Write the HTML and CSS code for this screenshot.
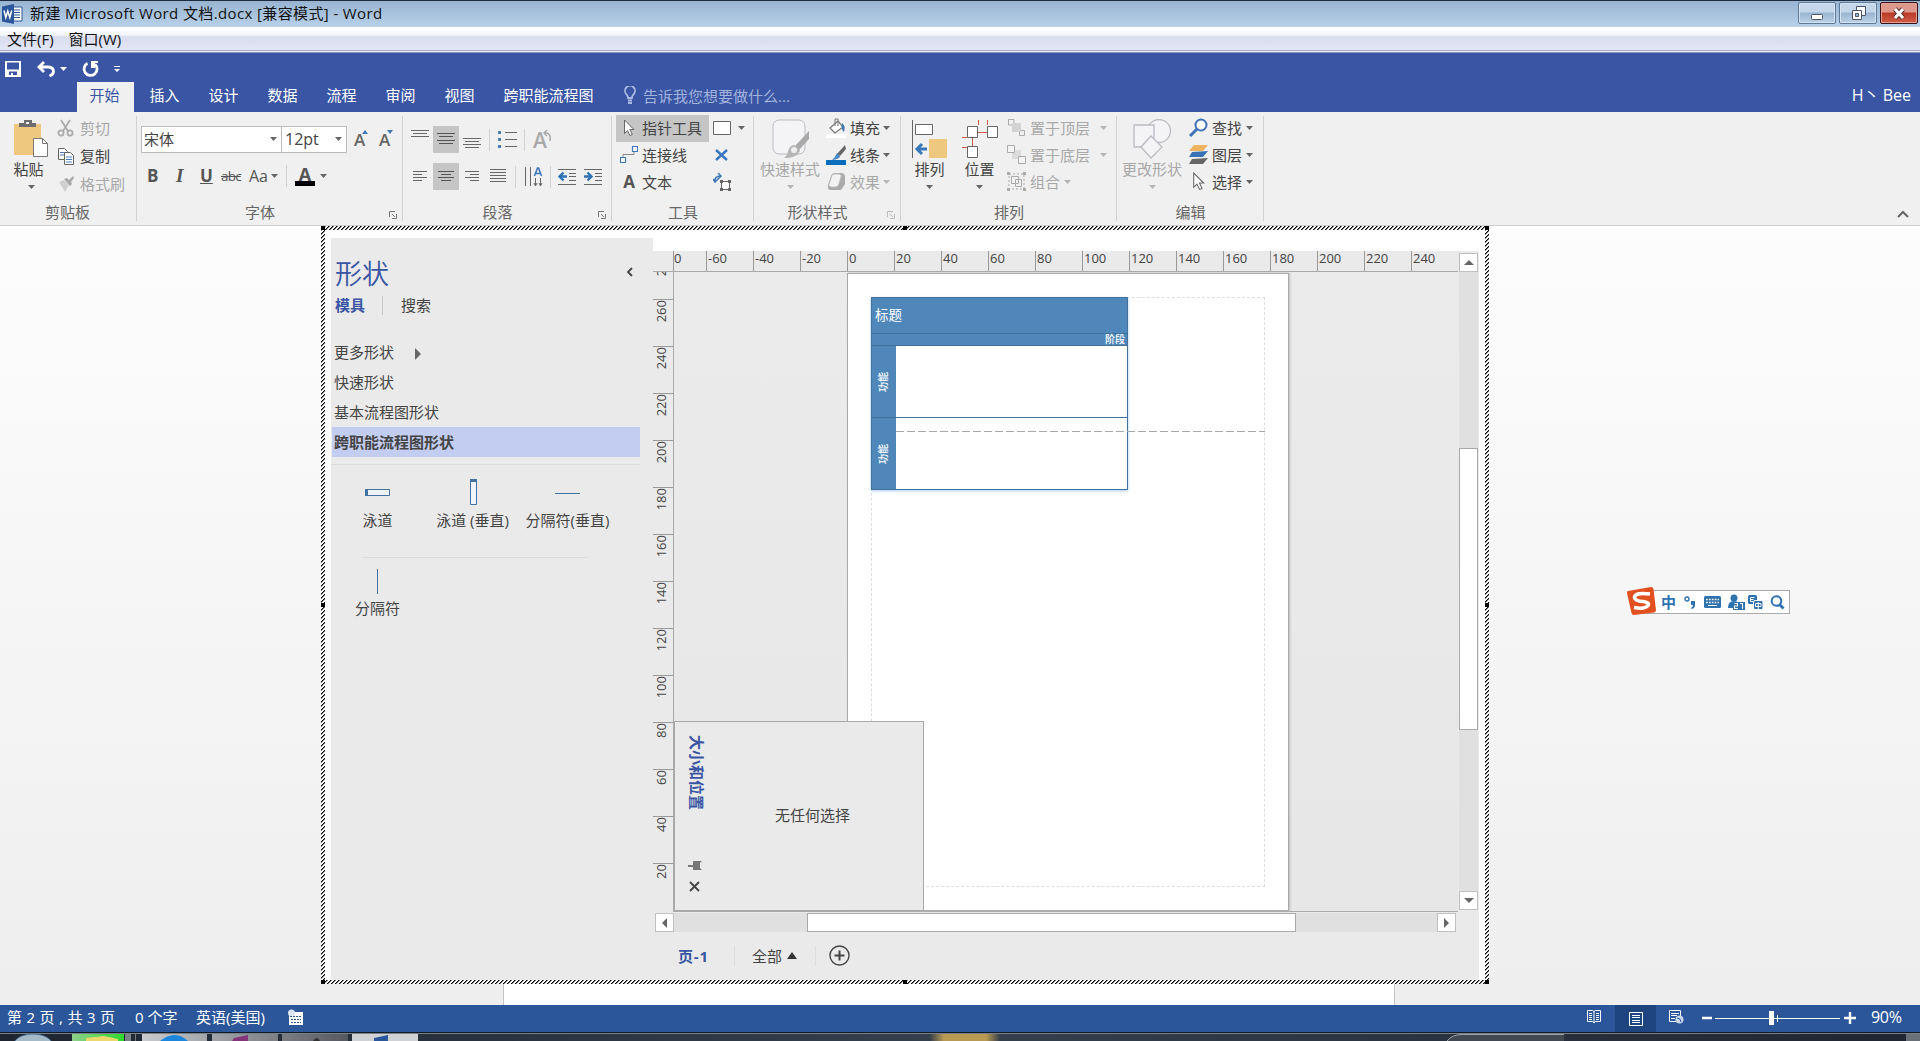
FILE: index.html
```html
<!DOCTYPE html>
<html lang="zh-CN">
<head>
<meta charset="utf-8">
<title>新建 Microsoft Word 文档.docx [兼容模式] - Word</title>
<link rel="stylesheet" href="styles.css">
</head>
<body>
<header class="titlebar">
  <svg class="app-icon" width="22" height="20" viewBox="0 0 22 20"><path d="M11 3h9v14h-9z" fill="#fff" stroke="#2b579a"/><path d="M12 6h6M12 8.500h6M12 11h6M12 13.500h6" stroke="#2b579a"/><path d="M0 2.500 12 0v20L0 17.500z" fill="#2b579a"/><path d="m2 6.500 1.800 7 2-6.500 2 6.500 1.900-7" fill="none" stroke="#fff" stroke-width="1.500"/></svg>
  <span class="window-title">新建 Microsoft Word 文档.docx [兼容模式] - Word</span>
  <div class="window-buttons">
    <span class="wbtn"><svg width="36" height="21"><rect x="12.500" y="11.500" width="11" height="5" rx="1" fill="#fff" stroke="#4a5566"/></svg></span>
    <span class="wbtn"><svg width="36" height="21"><path d="M16.500 3.500h9v9h-9z" fill="#fff" stroke="#4a5566"/><path d="M12.500 7.500h9v9h-9z" fill="#fff" stroke="#4a5566"/><path d="M15.500 10.500h3v3h-3z" fill="#9db8d4" stroke="#4a5566"/></svg></span>
    <span class="wbtn close"><svg width="36" height="21"><path d="m14 6 8 9m0-9-8 9" stroke="#5b3030" stroke-width="5"/><path d="m14 6 8 9m0-9-8 9" stroke="#fff" stroke-width="3"/></svg></span>
  </div>
</header>
<nav class="menubar"><span>文件(F)</span><span>窗口(W)</span></nav>

<div class="ribbon-head">
  <div class="qat">
    <svg width="17" height="17" viewBox="0 0 17 17"><path fill="#fff" fill-rule="evenodd" d="M0 0h16v16H0zM2 1.500v7h12v-7zM4 10.500V14h2v-2h2v2h4v-3.500z"/></svg>
    <svg class="undo" width="20" height="17" viewBox="0 0 20 17"><path d="M7 1 2 6l5 5M2.500 6h8q6 0 6 4.500 0 3-4 4.500" fill="none" stroke="#fff" stroke-width="2.800"/></svg>
    <svg class="caret w" width="7" height="4"><path d="M0 0h7L3.500 4z"/></svg>
    <svg class="redo" width="18" height="17" viewBox="0 0 18 17"><path d="M5.500 2.200A6.500 6.500 0 1 0 13 3.200" fill="none" stroke="#fff" stroke-width="2.800"/><path d="M9 0h7v2h-3v5H9z" fill="#fff"/></svg>
    <svg width="6" height="7"><path d="M0 0h6v1H0zM0 3h6L3 6z" fill="#fff"/></svg>
  </div>
  <div class="tabs">
    <span class="tab active">开始</span><span class="tab">插入</span><span class="tab">设计</span><span class="tab">数据</span><span class="tab">流程</span><span class="tab">审阅</span><span class="tab">视图</span><span class="tab wide">跨职能流程图</span>
    <span class="tell"><svg width="12" height="19" viewBox="0 0 12 19"><path d="M4 12q0-2-1.700-3.800a5 5 0 1 1 7.400 0Q8 10 8 12zM4 14.500h4M4 17h4" fill="none" stroke="#a9b8e2" stroke-width="1.800"/></svg>告诉我您想要做什么...</span>
    <span class="user"><span>H丶</span><span>Bee</span></span>
  </div>
</div>

<div class="ribbon">
  <section class="group g-clip">
    <div class="body">
      <div class="big paste"><svg width="36" height="40" viewBox="0 0 36 40"><path d="M1 5h27v31H1z" fill="#edc87e"/><path d="M6 8V4h5V1h8v3h4v4z" fill="#6d6d6d"/><path d="M13 3h3v2h-3z" fill="#f0f0f0"/><path d="M20.500 19.500h9l5 5v13h-14z" fill="#fff" stroke="#777"/><path d="M29.500 19.500v5h5" fill="none" stroke="#777"/></svg><span>粘贴</span><svg class="caret" width="7" height="4"><path d="M0 0h7L3.500 4z"/></svg></div>
      <div class="col">
        <div class="item off"><svg width="18" height="18" viewBox="0 0 18 18" fill="none" stroke="#aaa" stroke-width="1.800"><path d="m4 1 7 11M13 1 6 12"/><circle cx="4" cy="14" r="2.600"/><circle cx="13" cy="14" r="2.600"/></svg>剪切</div>
        <div class="item"><svg width="18" height="18" viewBox="0 0 18 18" fill="#fff" stroke="#666"><path d="M1.500 1.500h6l3 3v8h-9z"/><path d="M3 5.500h5M3 8h5" stroke="#4a7ebb"/><path d="M7.500 5.500h6l3 3v9h-9z"/><path d="M9 10h6M9 12.500h6M9 15h6" stroke="#4a7ebb"/></svg>复制</div>
        <div class="item off"><svg width="18" height="18" viewBox="0 0 18 18"><path d="m2 7 5-2 5 5-4 7z" fill="#d0d0d0"/><path d="m7 4 3-1 2 2 4-4 1 2-3 4 1 2-2 2z" fill="#a8a8a8"/></svg>格式刷</div>
      </div>
    </div>
    <div class="label">剪贴板</div>
  </section>

  <section class="group g-font">
    <div class="body stack">
      <div class="line combos"><span class="combo face">宋体<svg class="caret" width="7" height="4"><path d="M0 0h7L3.500 4z"/></svg></span><span class="combo size">12pt<svg class="caret" width="7" height="4"><path d="M0 0h7L3.500 4z"/></svg></span><span class="grow">A<svg width="6" height="4"><path d="M0 4h6L3 0z"/></svg></span><span class="grow">A<svg width="6" height="4"><path d="M0 0h6L3 4z"/></svg></span></div>
      <div class="line marks"><b class="m-b">B</b><b class="m-i">I</b><b class="m-u">U</b><span class="m-s">abc</span><span class="m-a">Aa</span><svg class="caret" width="7" height="4"><path d="M0 0h7L3.500 4z"/></svg><i class="vsep"></i><b class="m-c">A</b><svg class="caret" width="7" height="4"><path d="M0 0h7L3.500 4z"/></svg></div>
    </div>
    <div class="label">字体</div>
    <svg class="launcher" width="8" height="8"><path d="M.5 6V.5H6M3 3l3 3M7.500 3v4.500H3" fill="none" stroke="#777"/></svg>
  </section>

  <section class="group g-para">
    <div class="body stack">
      <div class="line p1">
        <svg width="26" height="27" stroke="#666"><path d="M4 4.500h18M6 7.500h14M4 10.500h18"/></svg>
        <svg class="on" width="26" height="27" stroke="#555"><path d="M4 7.500h18M6 10.500h14M4 14.500h18M6 17.500h14"/></svg>
        <svg width="26" height="27" stroke="#666"><path d="M4 12.500h18M6 15.500h14M4 18.500h18M6 21.500h14"/></svg>
        <i class="vsep a"></i>
        <svg class="bul" width="20" height="20"><path d="M7 2.500h12M7 9.500h12M7 16.500h12" stroke="#666"/><path d="M0 1h3v3H0zM0 8h3v3H0zM0 15h3v3H0z" fill="#4a7ebb"/></svg>
        <i class="vsep b"></i>
        <span class="rot">A<svg width="9" height="12" viewBox="0 0 9 12"><path d="M1 3h3q4 1 3 8M4 0 1 3l3 3" fill="none" stroke="#aaa" stroke-width="1.500"/></svg></span>
      </div>
      <div class="line p2">
        <svg width="26" height="27" stroke="#666"><path d="M6 8.500h14M6 11.500h9M6 14.500h14M6 17.500h9"/></svg>
        <svg class="on" width="26" height="27" stroke="#555"><path d="M5 8.500h16M8 11.500h10M5 14.500h16M8 17.500h10"/></svg>
        <svg width="26" height="27" stroke="#666"><path d="M6 8.500h14M11 11.500h9M6 14.500h14M11 17.500h9"/></svg>
        <svg width="26" height="27" stroke="#666"><path d="M5 6.500h16M5 9.500h16M5 12.500h16M5 15.500h16M5 18.500h16"/></svg>
        <i class="vsep c"></i>
        <svg class="vt" width="19" height="20" viewBox="0 0 19 20"><path d="M1.500 0v19M6.500 0v19M11.500 11v8M16.500 11v8M10 16l1.500 3 1.500-3M15 16l1.500 3 1.500-3" fill="none" stroke="#666"/><path d="m10.500 9 3-8h1l3 8M12 6.500h4" fill="none" stroke="#3f78b8" stroke-width="1.600"/></svg>
        <i class="vsep d"></i>
        <svg class="ind" width="19" height="18"><path d="M0 1.500h18M11 5.500h7M11 8.500h7M11 12.500h7M0 16.500h18" stroke="#666"/><path d="M9 8.500H2M5.500 4.500l-4 4 4 4" fill="none" stroke="#2f72b8" stroke-width="2.400"/></svg>
        <svg class="ind2" width="19" height="18"><path d="M0 1.500h18M11 5.500h7M11 8.500h7M11 12.500h7M0 16.500h18" stroke="#666"/><path d="M0 8.500h7M3.500 4.500l4 4-4 4" fill="none" stroke="#2f72b8" stroke-width="2.400"/></svg>
      </div>
    </div>
    <div class="label">段落</div>
    <svg class="launcher" width="8" height="8"><path d="M.5 6V.5H6M3 3l3 3M7.500 3v4.500H3" fill="none" stroke="#777"/></svg>
  </section>

  <section class="group g-tool">
    <div class="body">
      <div class="col">
        <div class="item sel"><svg width="18" height="18" viewBox="0 0 18 18"><path d="M4.500 1v13.500l3-3 2.500 5 2.300-1-2.400-5h4z" fill="#fff" stroke="#666"/></svg>指针工具</div>
        <div class="item"><svg width="18" height="18" viewBox="0 0 18 18" fill="#fff"><path d="M3 12V8.500h11V6" fill="none" stroke="#888"/><path d="M.5 11.500h5v5h-5zM12.500.5h5v5h-5z" stroke="#3f78b8" stroke-width="1.200"/></svg>连接线</div>
        <div class="item"><b class="ta">A</b>文本</div>
      </div>
      <div class="col side">
        <div class="item"><svg width="18" height="14"><path d="M.5.5h17v13H.5z" fill="#fff" stroke="#666"/></svg><svg class="caret" width="7" height="4"><path d="M0 0h7L3.500 4z"/></svg></div>
        <div class="item"><svg width="18" height="14"><path d="m3 2 11 10M14 2 3 12" stroke="#3a77c0" stroke-width="2.400"/></svg></div>
        <div class="item"><svg width="18" height="18" fill="none"><path d="M1.500 9q0-6 6-6M5 0l3 3-3 3M0 6l2 3 3-3" stroke="#3f78b8" stroke-width="1.500"/><path d="M8.500 8.500h8v8h-8z" stroke="#666" fill="#fff"/><path d="M7 7h3v3H7zM15 7h3v3h-3zM7 15h3v3H7zM15 15h3v3h-3z" fill="#666"/></svg></div>
      </div>
    </div>
    <div class="label">工具</div>
  </section>

  <section class="group g-style">
    <div class="body">
      <div class="big off quick"><svg width="40" height="40" viewBox="0 0 40 40"><rect x="3" y="1" width="32" height="34" rx="6" fill="#f4f3f6" stroke="#bdbac2"/><path d="M39 12v8l-10 11-4-4z" fill="#aaa"/><path d="m24 26 6 5q-2 8-16 8 4-3 4-7 2-6 6-6z" fill="#b5b5b5"/><circle cx="24" cy="31" r="3" fill="#eee"/></svg><span>快速样式</span><svg class="caret" width="7" height="4"><path d="M0 0h7L3.500 4z"/></svg></div>
      <div class="col">
        <div class="item"><svg width="20" height="20"><path d="m4 10 8-7 5 6-8 6z" fill="#fff" stroke="#777" stroke-width="1.200"/><path d="M9 8V1h3v7" fill="none" stroke="#777"/><path d="M16 5q4 3 2 9-3-2-2-9z" fill="#3f78b8"/><path d="M0 16h20v4H0z" fill="#fff"/></svg>填充<svg class="caret" width="7" height="4"><path d="M0 0h7L3.500 4z"/></svg></div>
        <div class="item"><svg width="20" height="20"><path d="m19 0 1 4-6 7-3-2z" fill="#666"/><path d="m11 8 3 3q0 3-8 4 3-2 5-7z" fill="#4a86c8"/><path d="M0 15h20v5H0z" fill="#0a6ebd"/></svg>线条<svg class="caret" width="7" height="4"><path d="M0 0h7L3.500 4z"/></svg></div>
        <div class="item off"><svg width="20" height="20"><path d="M2 13 5 4q1-3 4-3h6q4 0 4 4v7l-4 6H5q-4 0-3-5z" fill="#aaa"/><path d="m6 3-3 9q-1 3 2 3h5q2 0 3-3l2-7q1-3-2-3H9Q7 2 6 3z" fill="#f3f3f3" stroke="#bbb"/></svg>效果<svg class="caret" width="7" height="4"><path d="M0 0h7L3.500 4z"/></svg></div>
      </div>
    </div>
    <div class="label">形状样式</div>
    <svg class="launcher off" width="8" height="8"><path d="M.5 6V.5H6M3 3l3 3M7.500 3v4.500H3" fill="none" stroke="#bbb"/></svg>
  </section>

  <section class="group g-arr">
    <div class="body">
      <div class="big"><svg width="37" height="40" viewBox="0 0 37 40"><path d="M1.500 1v38" stroke="#666"/><path d="M4.500 5.500h17v10h-17z" fill="#fff" stroke="#666"/><path d="M18 20h18v19H18z" fill="#edc87e"/><path d="M16 30H6m5-5-5 5 5 5" fill="none" stroke="#3a77b8" stroke-width="3"/></svg><span>排列</span><svg class="caret" width="7" height="4"><path d="M0 0h7L3.500 4z"/></svg></div>
      <div class="big pos"><svg width="37" height="40" viewBox="0 0 37 40"><path d="M17.500 1v5M26.500 1v5M17 13.500h9M1 18.500h5M11.500 18v10M1 28.500h5M17 28.500h-3" stroke="#d05a48" fill="none"/><path d="M6.500 7.500h10v11h-10zM26.500 7.500h10v11h-10zM6.500 27.500h10v11h-10z" fill="#fff" stroke="#666"/></svg><span>位置</span><svg class="caret" width="7" height="4"><path d="M0 0h7L3.500 4z"/></svg></div>
      <div class="col">
        <div class="item off"><svg width="19" height="19"><path d="M1.500 7V1.500H7V7zM12.500 12.500h5v5h-5z" fill="#f0f0f0" stroke="#aaa"/><path d="M5 5h9v9H5z" fill="#d3d3d3"/></svg>置于顶层<svg class="caret far" width="7" height="4"><path d="M0 0h7L3.500 4z"/></svg></div>
        <div class="item off"><svg width="19" height="19"><path d="M5 5h9v9H5z" fill="#dcdcdc"/><path d="M.5.5h7v7h-7zM11.500 11.500h7v7h-7z" fill="#f4f4f4" stroke="#aaa"/></svg>置于底层<svg class="caret far" width="7" height="4"><path d="M0 0h7L3.500 4z"/></svg></div>
        <div class="item off"><svg width="19" height="19" fill="none" stroke="#aaa"><path d="M2 2h15v15H2z" stroke-dasharray="2 2"/><path d="M4.500 4.500h7v7h-7zM8.500 7.500h6v7h-6z"/><path d="M0 0h3v3H0zM16 0h3v3h-3zM0 16h3v3H0zM16 16h3v3h-3z" fill="#aaa" stroke="none"/></svg>组合<svg class="caret" width="7" height="4"><path d="M0 0h7L3.500 4z"/></svg></div>
      </div>
    </div>
    <div class="label">排列</div>
  </section>

  <section class="group g-edit">
    <div class="body">
      <div class="big off"><svg width="38" height="40" viewBox="0 0 38 40" fill="#f4f3f6" stroke="#bdbac2" stroke-width="1.300"><circle cx="26" cy="12" r="11.500"/><path d="M1 6h20v22H1z"/><path d="m18 17 11 11-11 11L8 28z"/></svg><span>更改形状</span><svg class="caret" width="7" height="4"><path d="M0 0h7L3.500 4z"/></svg></div>
      <div class="col">
        <div class="item"><svg width="19" height="19" fill="none" stroke="#3f72b8"><circle cx="12" cy="7" r="5.500" stroke-width="2" fill="#fff"/><path d="m8 11-7 7" stroke-width="3"/></svg>查找<svg class="caret" width="7" height="4"><path d="M0 0h7L3.500 4z"/></svg></div>
        <div class="item"><svg width="19" height="19"><path d="M5 0h14l-5 6H0z" fill="#eeb35e"/><path d="m3 7 16-1-5 6H0z" fill="#3a72b8"/><path d="m3 14 16-1-5 6H0z" fill="#666"/></svg>图层<svg class="caret" width="7" height="4"><path d="M0 0h7L3.500 4z"/></svg></div>
        <div class="item"><svg width="19" height="19" viewBox="0 0 18 18"><path d="M4.500 1v13.500l3-3 2.500 5 2.300-1-2.400-5h4z" fill="#fff" stroke="#666"/></svg>选择<svg class="caret" width="7" height="4"><path d="M0 0h7L3.500 4z"/></svg></div>
      </div>
    </div>
    <div class="label">编辑</div>
  </section>
  <svg class="collapse" width="12" height="8"><path d="m1 7 5-5 5 5" fill="none" stroke="#666" stroke-width="2"/></svg>
</div>

<main class="desk">
  <div class="object">
    <div class="inner">
      <aside class="shapes">
        <div class="sh-head"><h1>形状</h1><svg width="7" height="10"><path d="M6 1 2 5l4 4" fill="none" stroke="#444" stroke-width="1.800"/></svg></div>
        <div class="sh-tabs"><b>模具</b><i></i><span>搜索</span></div>
        <ul class="stencils">
          <li>更多形状<svg width="6" height="12"><path d="M0 0v12l6-6z" fill="#666"/></svg></li>
          <li>快速形状</li>
          <li>基本流程图形状</li>
          <li class="cur">跨职能流程图形状</li>
        </ul>
        <div class="masters">
          <div class="master"><svg width="30" height="30"><path d="M2.500 12.500h24v6h-24z" fill="#eef4fb" stroke="#44719f"/><path d="M2 12h3v7H2z" fill="#44719f"/></svg>泳道</div>
          <div class="master"><svg width="30" height="30"><path d="M12.500 3.500h6v24h-6z" fill="#eef4fb" stroke="#44719f"/><path d="M12 2h7v3h-7z" fill="#44719f"/></svg>泳道 (垂直)</div>
          <div class="master"><svg width="30" height="30"><path d="M2 16.500h25" stroke="#44719f"/></svg>分隔符(垂直)</div>
        </div>
        <div class="masters second">
          <div class="master"><svg width="30" height="30"><path d="M14.500 3v25" stroke="#44719f"/></svg>分隔符</div>
        </div>
      </aside>
      <section class="draw">
        <div class="rulers">
          <div class="hruler"><span class="first">0</span><span>-60</span><span>-40</span><span>-20</span><span>0</span><span>20</span><span>40</span><span>60</span><span>80</span><span>100</span><span>120</span><span>140</span><span>160</span><span>180</span><span>200</span><span>220</span><span>240</span></div>
          <div class="vruler"><span class="first">280</span><span>260</span><span>240</span><span>220</span><span>200</span><span>180</span><span>160</span><span>140</span><span>120</span><span>100</span><span>80</span><span>60</span><span>40</span><span>20</span></div>
          <div class="canvas">
            <div class="paper">
              <div class="margin"></div>
              <div class="pool">
                <div class="pool-title">标题</div>
                <div class="phase">阶段</div>
                <div class="lane"><div><span>功能</span></div></div>
                <div class="lane"><div><span>功能</span></div></div>
              </div>
              <div class="break"></div>
            </div>
            <div class="sizepos">
              <div class="sp-side"><b>大小和位置</b><svg width="14" height="11"><path d="M0 5h5V1h9l-2 2v5l2 2H5V7H0z" fill="#777"/></svg><svg class="x" width="11" height="11"><path d="m1 1 9 9m0-9-9 9" stroke="#444" stroke-width="1.800"/></svg></div>
              <span>无任何选择</span>
            </div>
          </div>
          <div class="vscroll"><span class="sb"><svg width="10" height="5"><path d="M0 5h10L5 0z"/></svg></span><span class="vthumb"></span><span class="sb"><svg width="10" height="5"><path d="M0 0h10L5 5z"/></svg></span></div>
        </div>
        <div class="hscroll"><span class="sb"><svg width="5" height="10"><path d="M5 0v10L0 5z"/></svg></span><span class="hthumb"></span><span class="sb"><svg width="5" height="10"><path d="M0 0v10l5-5z"/></svg></span></div>
        <div class="pagetabs"><b>页-1</b><i></i><span>全部</span><svg class="up" width="10" height="7"><path d="M0 7h10L5 0z" fill="#333"/></svg><i></i><svg width="21" height="21"><circle cx="10.500" cy="10.500" r="9.500" fill="none" stroke="#444" stroke-width="1.400"/><path d="M10.500 5.500v10M5.500 10.500h10" stroke="#444" stroke-width="2"/></svg></div>
      </section>
    </div>
    <svg class="frame" width="1168" height="758"><defs><pattern id="h" width="4" height="4" patternUnits="userSpaceOnUse"><path d="M0 3h1v1H0zM1 2h1v1H1zM2 1h1v1H2zM3 0h1v1H3z" fill="#000"/><path d="M1 3h1v1H1zM2 2h1v1H2zM3 1h1v1H3zM0 0h1v1H0z" fill="#777"/></pattern></defs><path fill="url(#h)" fill-rule="evenodd" d="M0 0h1168v758H0zM4 4v750h1160V4z"/><path d="M0 0h4v4H0zM582 0h4v4h-4zM1164 0h4v4h-4zM0 377h4v4H0zM1164 377h4v4h-4zM0 754h4v4H0zM582 754h4v4h-4zM1164 754h4v4h-4z"/></svg>
  </div>
  <div class="under"></div>
  <div class="ime">
    <svg class="sogou" width="30" height="30" viewBox="0 0 30 30"><path d="m1 5 23-4q2 0 2.500 2L29 24q0 2-2 2.500L7 29q-2 0-2.500-2L0 7q0-2 1-2z" fill="#e2501f"/><path d="M23 8Q8 6 7.500 11.500 8 15 16 15.500q7 1 5 4-3 4-14 2" fill="none" stroke="#fff" stroke-width="3.600"/></svg>
    <b>中</b>
    <svg class="punct" width="12" height="16"><circle cx="3" cy="5" r="2" fill="none" stroke="#2f72b0" stroke-width="1.400"/><path d="M7 7h4v4q0 3-3 4l-1-1q2-1 2-3H7z" fill="#2f72b0"/></svg>
    <svg width="17" height="12"><rect width="17" height="12" rx="1.500" fill="#2f72b0"/><path d="M2 3.500h13M2 6.500h13" stroke="#fff" stroke-width="1.500" stroke-dasharray="1.700 1.200"/><path d="M4 9.500h9" stroke="#fff"/></svg>
    <svg class="person" width="17" height="16"><circle cx="6" cy="4" r="3.500" fill="#2f72b0"/><path d="M0 14q0-7 6-7t6 7z" fill="#2f72b0"/><path d="M5 8h12v8H5z" fill="#2f72b0"/><path d="M6.500 9.500h3v2.500h-3v2.500h3.500M12 9.500h2.500v5.500" fill="none" stroke="#fff" stroke-width="1.100"/></svg>
    <svg width="15" height="15"><rect width="9" height="9" rx="1.500" fill="#2f72b0"/><path d="M6.500 2.500h-4v4h4M2.500 4.500h3" stroke="#fff" fill="none"/><rect x="5.500" y="5.500" width="9.500" height="9" rx="1.500" fill="#2f72b0" stroke="#fff"/><path d="M7.500 8.500h5.500v3H7.500zM10.250 7v7" stroke="#fff" fill="none"/></svg>
    <svg width="15" height="15"><circle cx="6.500" cy="6" r="4.800" fill="none" stroke="#2f72b0" stroke-width="2"/><path d="m9.500 9.500 4 4" stroke="#2f72b0" stroke-width="2.800"/></svg>
  </div>
</main>

<footer class="status">
  <span class="s1">第 2 页 , 共 3 页</span><span class="s2">0 个字</span><span class="s3">英语(美国)</span>
  <svg width="16" height="17"><path d="M3 3h12v13H1V7" fill="#fff"/><circle cx="3.500" cy="4" r="3.500" fill="#dbe5f4"/><path d="M2 7.500h12M3 10.500h10M3 13.500h10" stroke="#2b579a" stroke-dasharray="2 1"/></svg>
  <div class="views">
    <svg width="14" height="14"><path d="M.5.5h5l1.500 1 1.500-1h5v11h-5L7 13l-1.500-1.500h-5zM7 1v12M2 3.500h3M2 5.500h3M2 7.500h3M2 9.500h3M9 3.500h3M9 5.500h3M9 7.500h3M9 9.500h3" fill="none" stroke="#fff"/></svg>
    <span class="cur"><svg width="14" height="14"><path d="M.5.5h13v13H.5zM3 3.500h8M3 5.500h8M3 8.500h8M3 10.500h8" fill="none" stroke="#fff"/></svg></span>
    <svg width="15" height="14"><path d="M7 11.500H.5V.5h11V6M2 3.500h8M2 5.500h6M2 8.500h4" fill="none" stroke="#fff"/><circle cx="10.500" cy="9.500" r="4" fill="#c9d7ec"/><path d="m8 8 3 1 1 3" fill="none" stroke="#2b579a"/></svg>
  </div>
  <svg class="zoomer" width="154" height="16"><path d="M0 8h10M142 8h12M148 2v12" stroke="#fff" stroke-width="2.400"/><path d="M13 8.500h125M75.500 5v7" stroke="#fff"/><path d="M67 1h5v14h-5z" fill="#fff"/></svg>
  <span class="pct">90%</span>
</footer>
<div class="taskbar">
  <svg width="1920" height="9"><defs><linearGradient id="b" x2="1"><stop offset="0" stop-color="#c8cacd"/><stop offset="1" stop-color="#55595f"/></linearGradient><linearGradient id="g" x2="1"><stop offset="0" stop-color="#8fd08a"/><stop offset="1" stop-color="#2fd82c"/></linearGradient><linearGradient id="y" x2="1"><stop offset="0" stop-color="#b99a52" stop-opacity="0"/><stop offset=".2" stop-color="#b99a52"/><stop offset=".8" stop-color="#b99a52"/><stop offset="1" stop-color="#b99a52" stop-opacity="0"/></linearGradient></defs><path d="M0 .5h1920" stroke="#141a22"/><path d="M0 1.500h1920" stroke="#77818c"/><ellipse cx="33" cy="14" rx="20" ry="12" fill="#a5bac9" stroke="#4a6f92"/><path d="M72 2h52v7H72z" fill="url(#g)"/><path d="M86 9V6l18-2 14 3v2z" fill="#ecd86c"/><path d="M125 2h6v7h-6z" fill="#7b8288"/><path d="M135 2h1v7h-1z" fill="#777"/><path d="M142 2h65v7h-65zM212 2h66v7h-66zM282 2h66v7h-66z" fill="url(#b)"/><path d="M352 2h66v7h-66z" fill="#cfd1d5"/><path d="M160 9q15-12 28 0z" fill="#1b86dc"/><path d="m234 6 14-3v6h-16z" fill="#84357a"/><path d="M313 9q4-6 7 0z" fill="#333"/><path d="m374 6 14-3v6h-14z" fill="#2b579a"/><path d="M930 2h70v7h-70z" fill="url(#y)"/><path d="M1447 9q5-7 15-7h102v7z" fill="#414a53"/><path d="M1447 9q5-6.500 15-6.500h102" fill="none" stroke="#99a1a8"/><path d="M1906 2h14v7h-14z" fill="#687078"/></svg>
</div>
</body>
</html>
```

FILE: styles.css
```css
* { box-sizing: border-box; }
body {
  margin: 0; width: 1920px; height: 1041px; overflow: hidden;
  display: flex; flex-direction: column;
  font: 15px/20px "Open Sans", "Noto Sans CJK SC", sans-serif; color: #444; white-space: nowrap;
}
svg { display: block; flex: none; }
h1, ul { margin: 0; padding: 0; list-style: none; font-weight: normal; }
.caret { fill: #666; }
.caret.w { fill: #fff; }
.off .caret { fill: #b5b5b5; }

/* Window chrome */
.titlebar { height: 27px; flex: none; display: flex; align-items: center; padding: 0 0 1px 2px; color: #111;
  background: linear-gradient(#98b4d0, #b9d1ea); border-top: 1px solid #1d2b40; }
.window-title { margin-left: 6px; letter-spacing: .38px; padding-bottom: 1px; }
.window-buttons { display: flex; gap: 3px; margin: -2px 2px 0 auto; }
.wbtn { width: 38px; height: 22px; border: 1px solid #5f7896; border-radius: 2px; box-shadow: inset 0 0 0 1px #d5e3f2;
  background: linear-gradient(#c4d6e9 45%, #99b3cf 50%, #bcd2e8); }
.wbtn.close { border-color: #3d1015; box-shadow: inset 0 0 0 1px #e2a296; background: linear-gradient(#dd988b 45%, #ba3925 50%, #cf6048); }
.menubar { height: 26px; flex: none; display: flex; gap: 15px; padding: 2px 7px 0; color: #111;
  background: linear-gradient(#fff, #f3f5fb 30%, #d8dcee 38%, #e2e6f5 88%, #9fa9b8 90%, #eef 94%, #5e78a0); }

.ribbon-head { height: 59px; flex: none; background: #3955a3; color: #fff; }
.qat { height: 29px; display: flex; align-items: center; padding: 3px 0 0 5px; }
.undo { margin: 0 3px 0 15px; }
.redo { margin: 0 14px 0 15px; }
.tabs { display: flex; height: 30px; padding-left: 77px; line-height: 26px; }
.tab { width: 59px; text-align: center; }
.tab.wide { width: 119px; }
.tab.active { width: 57px; margin-right: 1px; padding-right: 2px; background: #f0f0f0; color: #3955a3; }
.tell { display: flex; align-items: center; gap: 7px; margin-left: 16px; color: #a3b2de; padding-bottom: 3px; }
.user { margin: 0 9px 0 auto; font-size: 16px; display: flex; gap: 2px; }
.user span:first-child { width: 29px; }

/* Ribbon */
.ribbon { height: 114px; flex: none; display: flex; background: #f0f0f0; border-bottom: 1px solid #d0d0d0; }
.group { position: relative; display: flex; flex-direction: column; }
.group::after { content: ""; position: absolute; right: 0; top: 4px; bottom: 4px; width: 1px; background: #d2d2d2; }
.body { height: 88px; display: flex; padding-top: 3px; }
.body.stack { flex-direction: column; padding-top: 14px; gap: 10px; }
.label { text-align: center; color: #666; line-height: 26px; }
.launcher { position: absolute; right: 6px; bottom: 6px; }
.g-clip { width: 137px; } .g-font { width: 266px; } .g-para { width: 209px; } .g-tool { width: 142px; }
.g-style { width: 147px; } .g-arr { width: 216px; } .g-edit { width: 147px; }
.g-font .label, .g-para .label { margin-right: 20px; }
.big { display: flex; flex-direction: column; align-items: center; padding-top: 4px; }
.big span { line-height: 20px; margin: 0 0 6px; }
.off { color: #a8a8a8; }
.col { display: flex; flex-direction: column; }
.item { height: 27px; display: flex; align-items: center; gap: 4px; padding-bottom: 2px; }
.item .caret { margin: 1px 0 0 0; }
.g-clip .label { margin-right: 2px; }
.g-clip .body { padding-left: 13px; gap: 8px; }
.g-clip .item { height: 28px; gap: 5px; }
.paste { width: 36px; }
.paste span { margin-right: 5px; }
.line { height: 27px; display: flex; align-items: center; }
.combos { padding-left: 4px; }
.combo { height: 27px; border: 1px solid #bbb; background: #fff; display: flex; align-items: center; padding: 0 4px 1px 2px; justify-content: space-between; }
.face { width: 141px; } .size { width: 66px; margin-left: -1px; padding-left: 3px; font-size: 16px; }
.grow { display: flex; align-items: flex-start; margin-left: 7px; font-size: 17px; font-weight: 600; color: #666; width: 18px; }
.grow svg { fill: #3f78b8; margin: 0 0 0 -3px; }
.marks { font-size: 17px; padding: 0 0 2px 10px; color: #555; }
.m-b { width: 29px; } .m-i { width: 24px; font: italic bold 19px "Liberation Serif", serif; } .m-u { width: 21px; text-decoration: underline; }
.m-s { width: 28px; font-size: 13.500px; text-decoration: line-through; letter-spacing: -.8px; } .m-a { width: 22px; font-size: 16px; }
.vsep { width: 1px; height: 22px; background: #d2d2d2; }
.marks .vsep { margin: 0 8px 0 8px; }
.m-c { width: 20px; height: 20px; line-height: 16px; text-align: center; border-bottom: 5px solid #000; margin-right: 5px; font-size: 18px; }
.p1, .p2 { padding-left: 4px; }
.on { background: #c5c5c5; }
.vsep.a { margin: 0 8px 0 4px; } .bul { margin-right: 6px; } .vsep.b { margin-right: 8px; }
.rot { display: flex; font-size: 21px; font-weight: 600; color: #aaa; }
.rot svg { margin-left: -4px; }
.vsep.c { margin: 0 8px 0 4px; } .vsep.d { margin: 0 7px; } .ind2 { margin-left: 7px; }
.g-tool .body { padding-left: 4px; gap: 4px; }
.g-tool .item { padding-left: 4px; width: 93px; }
.g-tool .side .item { width: 34px; padding-left: 0; }
.side .item .caret { margin-left: 3px; }
.sel { background: #c5c5c5; }
.ta { width: 18px; font-size: 17px; text-align: center; color: #555; }
.g-style .body { padding-left: 6px; gap: 6px; } .g-style .label { margin-right: 20px; }
.g-style .item .caret { margin-left: -1px; }
.g-arr .body { padding-left: 10px; } .g-arr .pos { margin: 0 9px 0 13px; }
.item .far { margin-left: 6px; }
.g-edit .body { padding-left: 5px; gap: 7px; }
.collapse { margin: 98px 11px 0 auto; }

/* Document area and embedded drawing */
.desk { flex: 1; min-height: 0; position: relative; background: linear-gradient(#fdfdfd, #eee); }
.object { position: relative; margin-left: 321px; width: 1168px; height: 758px; padding: 4px; background: #fff; }
.frame { position: absolute; left: 0; top: 0; }
.inner { display: flex; height: 750px; margin: 0 6px; }
.shapes { width: 322px; margin-top: 8px; background: #eaeaea; padding-top: 18px; }
.sh-head { display: flex; align-items: center; justify-content: space-between; height: 34px; padding: 0 20px 2px 4px; }
.sh-head h1 { font-size: 27px; line-height: 34px; color: #3955a3; font-weight: 350; padding-top: 3px; }
.sh-tabs { display: flex; align-items: center; margin: 5px 0 0 4px; }
.sh-tabs b { color: #3955a3; } .sh-tabs i { width: 1px; height: 19px; margin: 0 18px 0 17px; background: #c8c8c8; }
.stencils { margin: 22px 0 7px 1px; width: 308px; }
.stencils li { height: 30px; line-height: 30px; padding: 0 0 1px 2px; display: flex; align-items: center; gap: 21px; }
.stencils li svg { margin-top: 4px; }
.cur { font-weight: bold; }
.stencils .cur { background: #c3cdf2; }
.masters { display: flex; width: 309px; border-top: 1px solid #dcdcdc; padding-top: 12px; height: 93px; }
.master { width: 95px; margin-left: -1px; margin-right: 1px; display: flex; flex-direction: column; align-items: center; gap: 3px; }
.second { margin-left: 31px; width: 226px; padding-top: 8px; }
.second .master { margin-left: -32px; gap: 2px; }

.draw { width: 826px; margin-top: 21px; background: #eaeaea; }
.rulers { display: grid; grid-template: 21px 640px / 21px 784px 21px; height: 661px; }
.hruler { grid-column: 1 / 3; display: flex; border-bottom: 1px solid #aaa; color: #444; font-size: 13px; padding-left: 20px; }
.hruler span { width: 47px; flex: none; border-left: 1px solid #999; padding-left: 1px; height: 20px; line-height: 15px; }
.hruler .first { width: 33px; padding: 0; }
.hruler span:last-child { width: 40px; }
.vruler { grid-column: 1; grid-row: 2; border-right: 1px solid #aaa; font-size: 13px; }
.vruler span { writing-mode: sideways-lr; display: flex; align-items: center; justify-content: flex-end;
  width: 20px; height: 47px; border-top: 1px solid #999; padding-right: 5px; line-height: 16px; }
.vruler .first { height: 27px; border: 0; padding-bottom: 23px; overflow: hidden; justify-content: flex-start; }
.canvas { grid-column: 2; grid-row: 2; position: relative; background: linear-gradient(#ebebeb, #e7e7e7); border-bottom: 1px solid #aaa; padding: 1px 0 0 173px; }
.paper { position: relative; width: 442px; height: 638px; background: #fff; border: 1px solid #aaa; box-shadow: 1px 0 2px #bbb; padding: 23px; }
.margin { position: absolute; left: 23px; top: 23px; width: 394px; height: 590px; border: 1px dashed #dedede; }
.pool { position: relative; width: 257px; height: 193px; background: #4f87bb; border: 1px solid #41719c; color: #fff; box-shadow: 0 1px 3px #a8cdf0; }
.pool-title { height: 36px; line-height: 34px; padding-left: 3px; font-size: 13.500px; border-bottom: 1px solid #41719c; }
.phase { height: 11px; line-height: 11px; font-size: 10px; font-weight: 500; text-align: right; padding-right: 2px; }
.lane { height: 72px; border-top: 1px solid #41719c; background: linear-gradient(90deg, #4f87bb 24px, #fff 24px); }
.lane div { width: 22px; height: 71px; display: flex; align-items: center; justify-content: center; font-size: 10px; font-weight: 500; }
.lane span { rotate: -90deg; }
.break { position: absolute; left: 48px; right: 23px; top: 157px; height: 1px; background: repeating-linear-gradient(90deg, #aaa 0 8px, #fff 8px 11px); }
.sizepos { position: absolute; left: 0; bottom: 0; width: 250px; height: 190px; background: #eaeaea; border: 1px solid #a8a8a8; display: flex; }
.sp-side { width: 100px; padding: 13px 0 0 13px; }
.sp-side b { writing-mode: vertical-rl; text-orientation: sideways; color: #3955a3; display: block; height: 125px; line-height: 17px; width: 17px; }
.sp-side .x { margin: 10px 0 0 1px; }
.sizepos > span { margin-top: 83px; }
.vscroll { grid-column: 3; grid-row: 1 / 3; margin: 2px 2px 0 1px; width: 19px; height: 657px; display: flex; flex-direction: column; background: #e0e0e0; }
.sb { width: 19px; height: 19px; flex: none; border: 1px solid #c0c0c0; background: #fff; display: flex; align-items: center; justify-content: center; fill: #666; }
.vthumb { height: 282px; margin: 176px 0 auto; border: 1px solid #aaa; background: #fff; }
.hscroll { display: flex; width: 801px; height: 19px; margin: 1px 0 0 2px; background: #e0e0e0; }
.hthumb { width: 489px; margin: 0 141px 0 133px; border: 1px solid #aaa; background: #fff; }
.pagetabs { display: flex; align-items: center; height: 47px; padding-left: 25px; }
.pagetabs b { color: #3955a3; width: 56px; letter-spacing: .8px; }
.pagetabs i { width: 1px; height: 20px; background: #ddd; margin-right: 17px; }
.up { margin: 0 18px 0 5px; }
.pagetabs .up + i { margin-right: 13px; }
.under { margin-left: 503px; width: 892px; height: 21px; background: #fff; border: 1px solid #c4c4c4; border-width: 0 1px; }
.ime { position: absolute; left: 1640px; top: 364px; width: 150px; height: 24px; border: 1px solid #aaa; background: #fff; display: flex; align-items: center; gap: 7px; padding-left: 20px; color: #2f72b0; }
.sogou { position: absolute; left: -14px; top: -5px; }
.punct { margin: 0 1px; }
.person { margin-right: -4px; }

/* Status bar and desktop taskbar */
.status { height: 27px; flex: none; display: flex; align-items: center; background: #2b579a; color: #fff; padding: 0 17px 3px 7px; }
.s1 { width: 128px; word-spacing: .6px; } .s2 { width: 61px; } .s3 { width: 92px; }
.views { display: flex; align-items: center; margin-left: auto; }
.views .cur { width: 41px; height: 27px; margin: 3px 13px 0 14px; background: #1e4580; display: flex; align-items: center; justify-content: center; }
.zoomer { margin: 2px 15px 0 18px; }
.pct { width: 32px; font-size: 16px; letter-spacing: -.3px; }
.taskbar { height: 9px; flex: none; background: linear-gradient(90deg, #1d2630, #35404e 50%, #1e2731); }
```
